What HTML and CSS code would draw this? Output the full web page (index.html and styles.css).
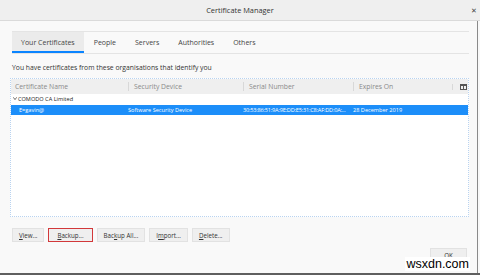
FILE: index.html
```html
<!DOCTYPE html>
<html lang="en">
<head>
    <meta charset="UTF-8">
    <title>Certificate Manager</title>
    <link rel="stylesheet" href="styles.css">
</head>
<body>
    <div class="window">
        <div class="titlebar">
            <span></span>
            <span class="title">Certificate Manager</span>
            <span class="close">&#x2715;</span>
        </div>

        <div class="content">
            <div class="tabs">
                <div class="tab active">Your Certificates</div>
                <div class="tab">People</div>
                <div class="tab">Servers</div>
                <div class="tab">Authorities</div>
                <div class="tab">Others</div>
            </div>

            <p class="intro">You have certificates from these organisations that identify you</p>

            <div class="tree">
                <div class="tree-head">
                    <div class="col">Certificate Name</div>
                    <div class="col">Security Device</div>
                    <div class="col">Serial Number</div>
                    <div class="col">Expires On</div>
                    <div class="col picker">
                        <svg width="7" height="6" viewBox="0 0 7 6">
                            <rect x="0.5" y="0.5" width="6" height="5" fill="none" stroke="#555" stroke-width="1"/>
                            <rect x="0.5" y="0.5" width="6" height="1.5" fill="#555"/>
                            <line x1="3.5" y1="2" x2="3.5" y2="6" stroke="#555" stroke-width="1"/>
                        </svg>
                    </div>
                </div>
                <div class="tree-row group">
                    <svg class="twisty" width="4" height="3" viewBox="0 0 4 3">
                        <polyline points="0.3,0.3 2,2.6 3.7,0.3" fill="none" stroke="#333" stroke-width="0.7"/>
                    </svg>COMODO CA Limited
                </div>
                <div class="tree-row selected">
                    <div class="cell first">E=gavin@</div>
                    <div class="cell">Software Security Device</div>
                    <div class="cell serial">30:53:86:51:9A:9E:DD:E5:31:C8:AF:DD:0A:...</div>
                    <div class="cell">28 December 2019</div>
                    <div class="cell"></div>
                </div>
            </div>

            <div class="actions">
                <button class="btn"><u>V</u>iew...</button>
                <button class="btn marked"><u>B</u>ackup...</button>
                <button class="btn">Bac<u>k</u>up All...</button>
                <button class="btn">I<u>m</u>port...</button>
                <button class="btn"><u>D</u>elete...</button>
            </div>

            <div class="footer">
                <button class="btn ok">OK</button>
            </div>
        </div>

        <div class="watermark">wsxdn.com</div>
    </div>
</body>
</html>
```

FILE: styles.css
```css
* {
    margin: 0;
    padding: 0;
    box-sizing: border-box;
}

body {
    font-family: 'Open Sans', 'Noto Sans', sans-serif;
    background: #f9f9f9;
    width: 480px;
    height: 275px;
    overflow: hidden;
}

.window {
    position: relative;
    width: 480px;
    height: 275px;
    display: flex;
    flex-direction: column;
    border-bottom: 2px solid #5f5f5f;
}

.titlebar {
    height: 21px;
    display: grid;
    grid-template-columns: 1fr auto 1fr;
    align-items: center;
    background: #efefef;
    border-bottom: 1px solid #dadada;
    color: #333;
    font-size: 7.4px;
}

.close {
    justify-self: end;
    margin-right: 3px;
    font-size: 7px;
    color: #444;
}

.content {
    flex: 1;
    display: flex;
    flex-direction: column;
    padding: 10px 0 0 10px;
    margin-right: 2px;
    border-right: 1px solid #8a8a8a;
}

.tabs {
    display: flex;
    margin: 0 8px 0 2px;
    border-top: 1px solid #e4e4e4;
    border-bottom: 1px solid #e4e4e4;
}

.tab {
    height: 21px;
    line-height: 21px;
    padding: 0 9px;
    margin-right: 1px;
    white-space: nowrap;
    font-size: 7px;
    color: #444;
}

.tab.active {
    background: #ebebeb;
    box-shadow: inset 0 -2px #0a84ff;
}

.intro {
    margin-top: 9px;
    padding-left: 2px;
    line-height: 10px;
    font-size: 6.8px;
    color: #333;
}

.tree {
    margin: 5px 8px 0 0;
    height: 139px;
    background: #fff;
    border: 1px dotted #b9d3f0;
}

.tree-head,
.tree-row.selected {
    display: grid;
    grid-template-columns: 117px 115px 110px 99px 1fr;
}

.tree-head {
    height: 15px;
    align-items: center;
    background: #efefef;
}

.col {
    padding-left: 5px;
    border-left: 1px solid #d8d8d8;
    line-height: 9px;
    font-size: 6.8px;
    color: #8a8a8a;
}

.col:first-child {
    border-left: none;
    padding-left: 4px;
}

.col.picker {
    display: flex;
    justify-content: center;
}

.tree-row {
    height: 11px;
    line-height: 11px;
    font-size: 5.6px;
    white-space: nowrap;
}

.tree-row.group {
    padding-left: 2px;
    color: #222;
}

.twisty {
    margin-right: 1px;
    vertical-align: 1px;
}

.tree-row.selected {
    height: 10px;
    line-height: 10px;
    background: #1c8ef9;
    color: #fff;
}

.cell {
    overflow: hidden;
}

.cell.first {
    padding-left: 8px;
}

.cell.serial {
    letter-spacing: -0.2px;
}

.actions {
    display: flex;
    gap: 4px;
    margin-top: 11px;
    padding-left: 2px;
}

.btn {
    height: 14px;
    padding: 0 6px;
    white-space: nowrap;
    font-family: inherit;
    font-size: 6.2px;
    color: #333;
    background: #efefef;
    border: 1px solid #e2e2e2;
}

.btn.marked {
    border: 1px solid #d2383a;
    padding: 0 8px;
}

.footer {
    display: flex;
    justify-content: flex-end;
    margin: 6px 10px 0 0;
}

.btn.ok {
    width: 37px;
}

.watermark {
    position: absolute;
    right: 10px;
    bottom: 2px;
    padding: 0 1px;
    background: #fff;
    font-family: 'Liberation Sans', Arial, sans-serif;
    font-size: 12.5px;
    line-height: 14px;
    color: #000;
}
```
